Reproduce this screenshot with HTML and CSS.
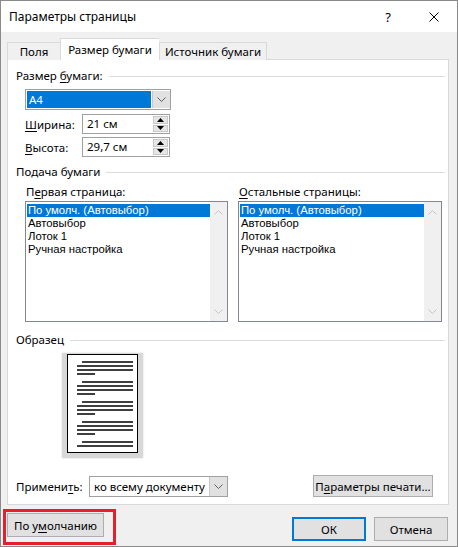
FILE: index.html
```html
<!DOCTYPE html>
<html lang="ru">
<head>
    <meta charset="UTF-8">
    <meta name="viewport" content="width=device-width, initial-scale=1.0">
    <title>Параметры страницы</title>
    <link rel="stylesheet" href="styles.css">
</head>
<body>
    <div class="window">
        <div class="titlebar">
            <span class="title">Параметры страницы</span>
            <span class="tb-button">?</span>
            <span class="tb-button">
                <svg width="10" height="10" viewBox="0 0 10 10"><path d="M0.5 0.5l9 9M9.5 0.5l-9 9" stroke="#000" stroke-width="1" fill="none"/></svg>
            </span>
        </div>

        <div class="client">
            <div class="tabs">
                <div class="tab tab-fields">Поля</div>
                <div class="tab active">Размер бумаги</div>
                <div class="tab tab-source">Источник бумаги</div>
            </div>

            <div class="panel">
                <!-- Paper size -->
                <div class="group-title"><span>Размер <u>б</u>умаги:</span></div>
                <div class="combo size-combo">
                    <span class="combo-value selected">A4</span>
                    <span class="combo-btn">
                        <svg width="9" height="5" viewBox="0 0 9 5"><path d="M0.5 0.5l4 4 4-4" stroke="#606060" fill="none"/></svg>
                    </span>
                </div>
                <div class="field-row first">
                    <span class="field-label"><u>Ш</u>ирина:</span>
                    <div class="spin-input">
                        <span class="spin-value">21 см</span>
                        <span class="spin">
                            <span class="spin-btn"><svg width="7" height="4" viewBox="0 0 7 4"><path d="M0 4h7L3.5 0z" fill="#000"/></svg></span>
                            <span class="spin-btn"><svg width="7" height="4" viewBox="0 0 7 4"><path d="M0 0h7L3.5 4z" fill="#000"/></svg></span>
                        </span>
                    </div>
                </div>
                <div class="field-row">
                    <span class="field-label"><u>В</u>ысота:</span>
                    <div class="spin-input">
                        <span class="spin-value">29,7 см</span>
                        <span class="spin">
                            <span class="spin-btn"><svg width="7" height="4" viewBox="0 0 7 4"><path d="M0 4h7L3.5 0z" fill="#000"/></svg></span>
                            <span class="spin-btn"><svg width="7" height="4" viewBox="0 0 7 4"><path d="M0 0h7L3.5 4z" fill="#000"/></svg></span>
                        </span>
                    </div>
                </div>

                <!-- Paper source -->
                <div class="group-title source-title"><span>Подача бумаги</span></div>
                <div class="trays">
                    <div class="tray">
                        <div class="tray-label">П<u>е</u>рвая страница:</div>
                        <div class="listbox">
                            <ul class="list-items">
                                <li class="selected">По умолч. (Автовыбор)</li>
                                <li>Автовыбор</li>
                                <li>Лоток 1</li>
                                <li>Ручная настройка</li>
                            </ul>
                            <div class="scrollbar">
                                <svg width="9" height="5" viewBox="0 0 9 5"><path d="M0.5 4.5l4-4 4 4" stroke="#c4c4c4" fill="none"/></svg>
                                <svg width="9" height="5" viewBox="0 0 9 5"><path d="M0.5 0.5l4 4 4-4" stroke="#c4c4c4" fill="none"/></svg>
                            </div>
                        </div>
                    </div>
                    <div class="tray">
                        <div class="tray-label"><u>О</u>стальные страницы:</div>
                        <div class="listbox">
                            <ul class="list-items">
                                <li class="selected">По умолч. (Автовыбор)</li>
                                <li>Автовыбор</li>
                                <li>Лоток 1</li>
                                <li>Ручная настройка</li>
                            </ul>
                            <div class="scrollbar">
                                <svg width="9" height="5" viewBox="0 0 9 5"><path d="M0.5 4.5l4-4 4 4" stroke="#c4c4c4" fill="none"/></svg>
                                <svg width="9" height="5" viewBox="0 0 9 5"><path d="M0.5 0.5l4 4 4-4" stroke="#c4c4c4" fill="none"/></svg>
                            </div>
                        </div>
                    </div>
                </div>

                <!-- Preview -->
                <div class="group-title preview-title"><span>Образец</span></div>
                <div class="preview">
                    <svg class="page" width="71" height="99" viewBox="0 0 71 99">
                        <rect x="0.5" y="0.5" width="70" height="98" fill="#fff" stroke="#000"/>
                        <g stroke="#000" stroke-width="1.4">
                            <path d="M15 8h51M10 12h56M10 16h56M10 20h18"/>
                            <path d="M15 28h51M10 32h56M10 36h56M10 40h18"/>
                            <path d="M15 48h51M10 52h56M10 56h56M10 60h18"/>
                            <path d="M15 68h51M10 72h56M10 76h56M10 80h18"/>
                            <path d="M15 88h51M10 92h56"/>
                        </g>
                    </svg>
                </div>

                <div class="apply-row">
                    <span class="apply-label">Примени<u>т</u>ь:</span>
                    <div class="combo apply-combo">
                        <span class="combo-value">ко всему документу</span>
                        <span class="combo-btn">
                            <svg width="9" height="5" viewBox="0 0 9 5"><path d="M0.5 0.5l4 4 4-4" stroke="#606060" fill="none"/></svg>
                        </span>
                    </div>
                    <button class="btn print-btn">П<u>а</u>раметры печати...</button>
                </div>
            </div>
        </div>

        <div class="footer">
            <div class="highlight">
                <button class="btn default-btn">По у<u>м</u>олчанию</button>
            </div>
            <div class="footer-buttons">
                <button class="btn ok-btn">ОК</button>
                <button class="btn">Отмена</button>
            </div>
        </div>
    </div>
</body>
</html>
```

FILE: styles.css
```css
body {
    margin: 0;
    font-family: "Noto Sans", "Open Sans", sans-serif;
    font-size: 11.5px;
    color: #000;
    background: #fff;
}

u {
    text-underline-offset: 2px;
}

.window {
    box-sizing: border-box;
    width: 458px;
    height: 547px;
    border: 1px solid #8a8a8a;
    background-color: #f0f0f0;
    display: flex;
    flex-direction: column;
}

.titlebar {
    height: 31px;
    background-color: #fff;
    display: flex;
    align-items: center;
    padding-left: 8px;
    flex-shrink: 0;
}

.title {
    flex: 1;
    font-size: 12px;
}

.tb-button {
    width: 46px;
    height: 31px;
    display: flex;
    align-items: center;
    justify-content: center;
    font-size: 13px;
}

.client {
    padding: 6px 8px 0 6px;
}

.tabs {
    display: flex;
    height: 22px;
    position: relative;
    z-index: 1;
}

.tab {
    box-sizing: border-box;
    margin-top: 4px;
    height: 18px;
    line-height: 17px;
    border: 1px solid #d9d9d9;
    border-bottom: none;
    background-color: #f0f0f0;
    text-align: center;
    white-space: nowrap;
}

.tab-fields {
    width: 53px;
    border-right: none;
}

.tab-source {
    width: 108px;
}

.tab.active {
    margin-top: 0;
    height: 22px;
    line-height: 22px;
    width: 99px;
    background-color: #fff;
    border-right: none;
}

.panel {
    margin-top: -1px;
    background-color: #fff;
    border: 1px solid #d9d9d9;
    padding: 8px 3px 7px 8px;
}

.group-title {
    display: flex;
    align-items: center;
    height: 16px;
    line-height: 16px;
    white-space: nowrap;
}

.group-title::after {
    content: "";
    flex: 1;
    height: 1px;
    margin-left: 6px;
    background-color: #dcdcdc;
}

.source-title {
    margin-top: 7px;
}

.preview-title {
    margin-top: 10px;
}

.combo {
    box-sizing: border-box;
    display: flex;
    flex-shrink: 0;
    border: 1px solid #a0a0a0;
    background-color: #fff;
    white-space: nowrap;
}

.size-combo {
    margin: 5px 0 0 9px;
    width: 146px;
    height: 21px;
    padding: 1px 0 1px 1px;
}

.combo-value {
    flex: 1;
    line-height: 17px;
    padding-left: 4px;
}

.combo-value.selected {
    background-color: #0078d7;
    color: #fff;
    padding-left: 2px;
    margin-right: 1px;
}

.combo-btn {
    width: 17px;
    display: flex;
    align-items: center;
    justify-content: center;
    background-color: #e1e1e1;
    border-left: 1px solid #c8c8c8;
}

.field-row {
    display: flex;
    align-items: center;
    margin: 3px 0 0 9px;
}

.field-row.first {
    margin-top: 4px;
}

.field-label {
    width: 57px;
}

.spin-input {
    box-sizing: border-box;
    display: flex;
    width: 88px;
    height: 20px;
    border: 1px solid #a0a0a0;
    padding: 1px;
}

.spin-value {
    flex: 1;
    line-height: 16px;
    padding-left: 3px;
}

.spin {
    width: 15px;
    display: flex;
    flex-direction: column;
    gap: 1px;
}

.spin-btn {
    flex: 1;
    display: flex;
    align-items: center;
    justify-content: center;
    background-color: #e6e6e6;
    border: 1px solid #c8c8c8;
}

.trays {
    display: grid;
    grid-template-columns: 203px 204px;
    column-gap: 10px;
    margin: 4px 0 0 9px;
}

.tray-label {
    height: 16px;
    line-height: 16px;
    padding-left: 1px;
}

.listbox {
    box-sizing: border-box;
    margin-top: 1px;
    height: 121px;
    border: 1px solid #828790;
    display: flex;
}

.list-items {
    flex: 1;
    list-style: none;
    margin: 0;
    padding: 2px 0 0 1px;
    font-family: "Liberation Sans", Arial, sans-serif;
    font-size: 11.3px;
}

.list-items li {
    height: 13px;
    line-height: 13px;
    padding-left: 1px;
    white-space: nowrap;
}

.list-items li.selected {
    background-color: #0078d7;
    color: #fff;
}

.scrollbar {
    width: 17px;
    background-color: #f0f0f0;
    display: flex;
    flex-direction: column;
    align-items: center;
    justify-content: space-between;
    padding: 8px 0 7px;
    box-sizing: border-box;
}

.preview {
    margin: 5px 0 0 46px;
    width: 71px;
    padding: 1px 5px 5px;
    background-color: #d8d8d8;
    box-shadow: 0 0 2px #d8d8d8;
}

.page {
    display: block;
}

.apply-row {
    display: flex;
    align-items: center;
    margin: 17px 12px 0 0;
    height: 22px;
    white-space: nowrap;
}

.apply-label {
    width: 73px;
    flex-shrink: 0;
}

.apply-combo {
    width: 139px;
    height: 21px;
}

.apply-combo .combo-value {
    line-height: 19px;
}

.btn {
    box-sizing: border-box;
    font-family: inherit;
    font-size: 11.5px;
    color: #000;
    background-color: #e1e1e1;
    border: 1px solid #adadad;
    padding: 0;
    height: 24px;
    white-space: nowrap;
}

.print-btn {
    margin-left: auto;
    width: 120px;
    height: 22px;
}

.footer {
    flex: 1;
    display: flex;
    justify-content: space-between;
    align-items: flex-start;
    padding: 4px 9px 0 2px;
}

.highlight {
    border: 3px solid #e3202c;
    padding: 1px 9px 5px 1px;
}

.default-btn {
    width: 97px;
}

.footer-buttons {
    display: flex;
    gap: 8px;
    margin-top: 8px;
}

.footer-buttons .btn {
    width: 74px;
}

.ok-btn {
    border: 2px solid #0078d7;
}
```
